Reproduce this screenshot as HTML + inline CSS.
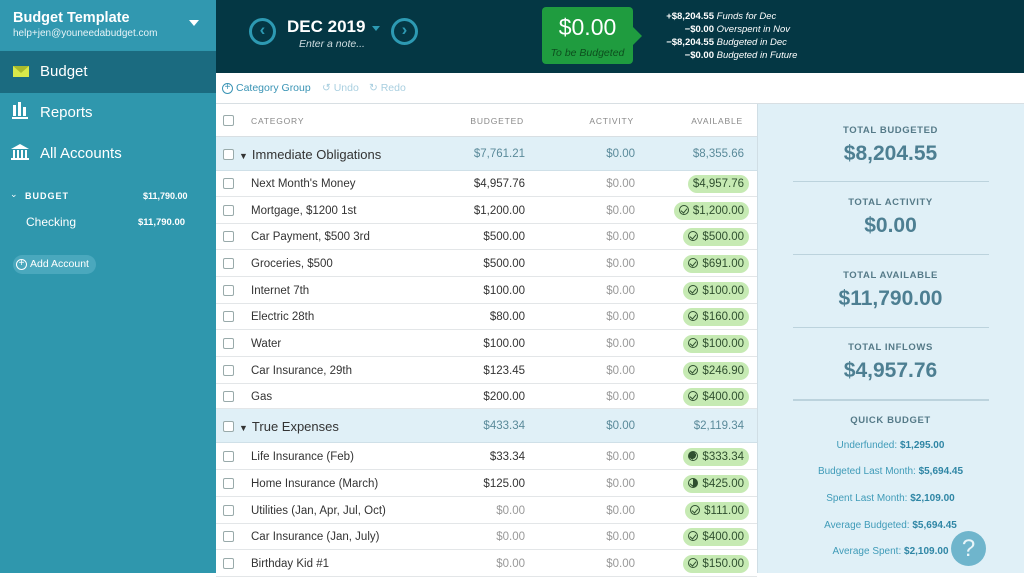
<!DOCTYPE html>
<html><head><meta charset="utf-8"><style>
*{margin:0;padding:0;box-sizing:border-box}
body{width:1024px;height:573px;overflow:hidden;position:relative;font-family:"Liberation Sans",sans-serif;background:#fff;color:#333}
.abs{position:absolute}
#side{left:0;top:0;width:216px;height:573px;background:#2f97ad}
#top{left:216px;top:0;width:808px;height:73px;background:#043744}
.nav{position:absolute;left:0;width:216px;height:42px;color:#fff;font-size:15px;line-height:42px}
.nav span{position:absolute;left:40px}
.r{position:absolute;left:216px;width:541px;height:27px;border-bottom:1px solid #e3e6e8;font-size:11.5px;line-height:28px}
.g{background:#e0f0f7;height:34px;line-height:35px;border-bottom:1px solid #cfe0e8}
.cb{position:absolute;left:7px;top:8px;width:11px;height:11px;border:1px solid #9aa;border-radius:2px;background:#fff}
.g .cb{top:12px}
.n{position:absolute;left:35px;color:#333}
.g .n{font-size:13px;color:#333}
.b{position:absolute;right:232px;color:#333}
.a{position:absolute;right:122px;color:#999}
.v{position:absolute;right:8px;top:5px;height:18px;line-height:18px;background:#c6eab3;border-radius:9px;padding:0 5px;color:#2f4f2f}
.g .b,.g .a,.g .v{color:#5a8a9a}
.g .v{background:none;top:0;height:34px;line-height:35px}
.gray{color:#999 !important}
.ck{display:inline-block;width:10px;height:10px;border:1.2px solid #2f4f2f;border-radius:50%;margin-right:4px;vertical-align:-1px;position:relative}
.ck:after{content:"";position:absolute;left:2px;top:1px;width:3px;height:5px;border:solid #2f4f2f;border-width:0 1.2px 1.2px 0;transform:rotate(40deg)}
.rt{position:absolute;left:757px;width:267px;text-align:center}
.lab{font-size:9.5px;font-weight:bold;letter-spacing:.6px;color:#557a88}
.val{font-size:21px;font-weight:bold;color:#4d7f92}
.hr{position:absolute;left:793px;width:196px;height:1px;background:#bcd3dd}
.q{font-size:10px;color:#3f9bb8}
.q b{color:#2f86a5}
.th{position:absolute;top:116px;font-size:8.5px;letter-spacing:.8px;color:#888}
.amt{width:56px;text-align:right;display:inline-block;font-weight:bold}
</style></head><body>
<div id="side" class="abs">
 <div class="abs" style="left:0;top:0;width:216px;height:50px;background:#3198b0"></div>
 <div class="abs" style="left:13px;top:10px;color:#fff;font-weight:bold;font-size:14.5px">Budget Template</div>
 <div class="abs" style="left:13px;top:28px;color:#e6f3f7;font-size:10px">help+jen@youneedabudget.com</div>
 <div class="abs" style="left:189px;top:20px;width:0;height:0;border-left:5px solid transparent;border-right:5px solid transparent;border-top:6px solid #fff"></div>
 <div class="nav" style="top:51px;background:#1b6b80"><span>Budget</span>
  <div class="abs" style="left:13px;top:15px;width:16px;height:11px;background:#d8e94a"></div>
  <div class="abs" style="left:13px;top:15px;width:16px;height:7px;clip-path:polygon(0 0,100% 0,50% 100%);background:#a9bb2c"></div>
 </div>
 <div class="nav" style="top:92px"><span>Reports</span>
  <div class="abs" style="left:13px;top:13px;width:3px;height:11px;background:#fff"></div>
  <div class="abs" style="left:18px;top:10px;width:3px;height:14px;background:#fff"></div>
  <div class="abs" style="left:23px;top:15px;width:3px;height:9px;background:#fff"></div>
  <div class="abs" style="left:12px;top:25px;width:16px;height:2px;background:#fff"></div>
 </div>
 <div class="nav" style="top:133px"><span>All Accounts</span>
  <div class="abs" style="left:11px;top:11px;width:0;height:0;border-left:9px solid transparent;border-right:9px solid transparent;border-bottom:5px solid #fff"></div>
  <div class="abs" style="left:13px;top:17px;width:14px;height:8px;background:repeating-linear-gradient(90deg,#fff 0 2px,transparent 2px 4px)"></div>
  <div class="abs" style="left:11px;top:25px;width:18px;height:2px;background:#fff"></div>
 </div>
 <div class="abs" style="left:10px;top:189px;color:#fff;font-size:9px">⌄</div>
 <div class="abs" style="left:25px;top:191px;color:#fff;font-size:9px;font-weight:bold;letter-spacing:1px">BUDGET</div>
 <div class="abs" style="left:143px;top:191px;color:#fff;font-size:9px;font-weight:bold">$11,790.00</div>
 <div class="abs" style="left:26px;top:215px;color:#fff;font-size:12px">Checking</div>
 <div class="abs" style="left:138px;top:217px;color:#fff;font-size:9.5px;font-weight:bold">$11,790.00</div>
 <div class="abs" style="left:13px;top:255px;width:83px;height:19px;border-radius:10px;background:#4aa8bd;color:#fff;font-size:10.5px;line-height:19px;padding-left:17px">Add Account</div>
 <div class="abs" style="left:16px;top:259px;width:11px;height:11px;border:1.3px solid #fff;border-radius:50%;color:#fff;font-size:10px;line-height:8px;text-align:center">+</div>
</div>
<div id="top" class="abs">
 <div class="abs" style="left:33px;top:18px;width:27px;height:27px;border:3.5px solid #2d9ab3;border-radius:50%;color:#2d9ab3;font-weight:bold;font-size:17px;line-height:18px;text-align:center">‹</div>
 <div class="abs" style="left:71px;top:17px;color:#fff;font-weight:bold;font-size:17px">DEC 2019</div>
 <div class="abs" style="left:156px;top:26px;width:0;height:0;border-left:4px solid transparent;border-right:4px solid transparent;border-top:5px solid #2d9ab3"></div>
 <div class="abs" style="left:83px;top:38px;color:#cfdde1;font-style:italic;font-size:10.5px">Enter a note...</div>
 <div class="abs" style="left:175px;top:18px;width:27px;height:27px;border:3.5px solid #2d9ab3;border-radius:50%;color:#2d9ab3;font-weight:bold;font-size:17px;line-height:18px;text-align:center">›</div>
 <div class="abs" style="left:326px;top:7px;width:91px;height:57px;background:#1f9c3f;border-radius:4px"></div>
 <div class="abs" style="left:416px;top:26px;width:0;height:0;border-top:10px solid transparent;border-bottom:10px solid transparent;border-left:10px solid #1f9c3f"></div>
 <div class="abs" style="left:326px;top:14px;width:91px;text-align:center;color:#fff;font-size:23px">$0.00</div>
 <div class="abs" style="left:326px;top:47px;width:91px;text-align:center;color:#0d4f1e;font-style:italic;font-size:10.5px">To be Budgeted</div>
 <div class="abs" style="left:442px;top:10px;color:#fff;font-size:9.5px;line-height:13px">
  <div class="amt">+$8,204.55</div> <i>Funds for Dec</i><br>
  <div class="amt">−$0.00</div> <i>Overspent in Nov</i><br>
  <div class="amt">−$8,204.55</div> <i>Budgeted in Dec</i><br>
  <div class="amt">−$0.00</div> <i>Budgeted in Future</i>
 </div>
</div>
<div class="abs" style="left:216px;top:103px;width:808px;height:1px;background:#d8dfe3"></div>
<div class="abs" style="left:222px;top:83px;width:11px;height:11px;border:1.2px solid #3a94b5;border-radius:50%;color:#3a94b5;font-size:10px;line-height:8px;text-align:center">+</div>
<div class="abs" style="left:236px;top:82px;color:#3a94b5;font-size:10.5px">Category Group</div>
<div class="abs" style="left:322px;top:82px;color:#a9cfe0;font-size:10.5px">↺ Undo</div>
<div class="abs" style="left:369px;top:82px;color:#a9cfe0;font-size:10.5px">↻ Redo</div>
<div class="abs" style="left:216px;top:136px;width:541px;height:1px;background:#d8dfe3"></div>
<div class="cb" style="left:223px;top:115px"></div>
<div class="th" style="left:251px">CATEGORY</div>
<div class="th" style="right:500px">BUDGETED</div>
<div class="th" style="right:390px">ACTIVITY</div>
<div class="th" style="right:281px">AVAILABLE</div>

<div class="r g" style="top:137px"><div class="cb"></div><div class="n"><span style="font-size:9px;margin-left:-12px;margin-right:4px">▼</span>Immediate Obligations</div><div class="b">$7,761.21</div><div class="a">$0.00</div><div class="v">$8,355.66</div></div>
<div class="r" style="top:170px"><div class="cb"></div><div class="n">Next Month's Money</div><div class="b">$4,957.76</div><div class="a">$0.00</div><div class="v">$4,957.76</div></div>
<div class="r" style="top:197px"><div class="cb"></div><div class="n">Mortgage, $1200 1st</div><div class="b">$1,200.00</div><div class="a">$0.00</div><div class="v"><span class="ck"></span>$1,200.00</div></div>
<div class="r" style="top:223px"><div class="cb"></div><div class="n">Car Payment, $500 3rd</div><div class="b">$500.00</div><div class="a">$0.00</div><div class="v"><span class="ck"></span>$500.00</div></div>
<div class="r" style="top:250px"><div class="cb"></div><div class="n">Groceries, $500</div><div class="b">$500.00</div><div class="a">$0.00</div><div class="v"><span class="ck"></span>$691.00</div></div>
<div class="r" style="top:277px"><div class="cb"></div><div class="n">Internet 7th</div><div class="b">$100.00</div><div class="a">$0.00</div><div class="v"><span class="ck"></span>$100.00</div></div>
<div class="r" style="top:303px"><div class="cb"></div><div class="n">Electric 28th</div><div class="b">$80.00</div><div class="a">$0.00</div><div class="v"><span class="ck"></span>$160.00</div></div>
<div class="r" style="top:330px"><div class="cb"></div><div class="n">Water</div><div class="b">$100.00</div><div class="a">$0.00</div><div class="v"><span class="ck"></span>$100.00</div></div>
<div class="r" style="top:357px"><div class="cb"></div><div class="n">Car Insurance, 29th</div><div class="b">$123.45</div><div class="a">$0.00</div><div class="v"><span class="ck"></span>$246.90</div></div>
<div class="r" style="top:383px;height:26px"><div class="cb"></div><div class="n">Gas</div><div class="b">$200.00</div><div class="a">$0.00</div><div class="v"><span class="ck"></span>$400.00</div></div>
<div class="r g" style="top:409px"><div class="cb"></div><div class="n"><span style="font-size:9px;margin-left:-12px;margin-right:4px">▼</span>True Expenses</div><div class="b">$433.34</div><div class="a">$0.00</div><div class="v">$2,119.34</div></div>
<div class="r" style="top:443px"><div class="cb"></div><div class="n">Life Insurance (Feb)</div><div class="b">$33.34</div><div class="a">$0.00</div><div class="v"><span class="ck" style="background:radial-gradient(circle at 40% 40%,#2f4f2f 0 55%,transparent 56%)"></span>$333.34</div></div>
<div class="r" style="top:470px"><div class="cb"></div><div class="n">Home Insurance (March)</div><div class="b">$125.00</div><div class="a">$0.00</div><div class="v"><span class="ck" style="background:linear-gradient(90deg,transparent 50%,#2f4f2f 50%)"></span>$425.00</div></div>
<div class="r" style="top:497px"><div class="cb"></div><div class="n">Utilities (Jan, Apr, Jul, Oct)</div><div class="b gray">$0.00</div><div class="a">$0.00</div><div class="v"><span class="ck"></span>$111.00</div></div>
<div class="r" style="top:523px"><div class="cb"></div><div class="n">Car Insurance (Jan, July)</div><div class="b gray">$0.00</div><div class="a">$0.00</div><div class="v"><span class="ck"></span>$400.00</div></div>
<div class="r" style="top:550px"><div class="cb"></div><div class="n">Birthday Kid #1</div><div class="b gray">$0.00</div><div class="a">$0.00</div><div class="v"><span class="ck"></span>$150.00</div></div>

<div class="abs" style="left:757px;top:104px;width:267px;height:469px;background:#e0f0f7;border-left:1px solid #d0dee5"></div>
<div class="rt lab" style="top:125px">TOTAL BUDGETED</div>
<div class="rt val" style="top:142px">$8,204.55</div>
<div class="hr" style="top:181px"></div>
<div class="rt lab" style="top:197px">TOTAL ACTIVITY</div>
<div class="rt val" style="top:214px">$0.00</div>
<div class="hr" style="top:254px"></div>
<div class="rt lab" style="top:270px">TOTAL AVAILABLE</div>
<div class="rt val" style="top:287px">$11,790.00</div>
<div class="hr" style="top:327px"></div>
<div class="rt lab" style="top:342px">TOTAL INFLOWS</div>
<div class="rt val" style="top:359px">$4,957.76</div>
<div class="hr" style="top:399px;height:2px"></div>
<div class="rt lab" style="top:415px">QUICK BUDGET</div>
<div class="rt q" style="top:440px">Underfunded: <b>$1,295.00</b></div>
<div class="rt q" style="top:466px">Budgeted Last Month: <b>$5,694.45</b></div>
<div class="rt q" style="top:493px">Spent Last Month: <b>$2,109.00</b></div>
<div class="rt q" style="top:520px">Average Budgeted: <b>$5,694.45</b></div>
<div class="rt q" style="top:546px">Average Spent: <b>$2,109.00</b></div>
<div class="abs" style="left:951px;top:531px;width:35px;height:35px;border-radius:50%;background:#6fb5cc;color:#e8f5f9;font-size:24px;line-height:35px;text-align:center">?</div>
</body></html>
